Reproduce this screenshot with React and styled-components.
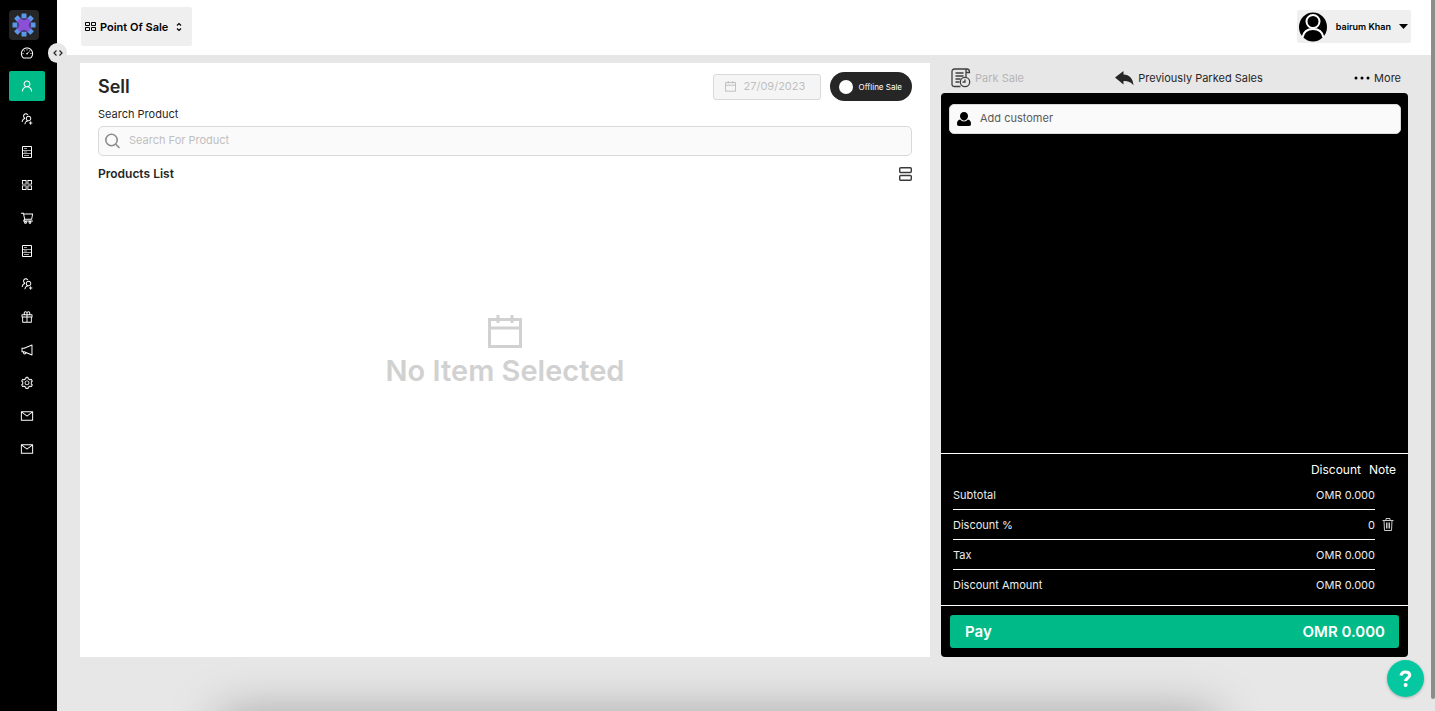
import React from 'react';
import styled, { createGlobalStyle } from 'styled-components';
import {
  AiOutlineAppstore,
  AiOutlineDashboard,
  AiOutlineGift,
  AiOutlineMail,
  AiOutlineNotification,
  AiOutlineSetting,
  AiOutlineShoppingCart,
  AiOutlineUser,
  AiOutlineUsergroupAdd,
} from 'react-icons/ai';

const GlobalStyle = createGlobalStyle`
  * {
    box-sizing: border-box;
  }
  body {
    margin: 0;
    background: #e7e7e7;
    color: #262626;
    font-family: Inter, 'Liberation Sans', sans-serif;
    font-size: 11px;
    line-height: 16px;
    overflow: hidden;
  }
  button, input {
    font: inherit;
    color: inherit;
  }
  button {
    border: 0;
    padding: 0;
    background: none;
    cursor: pointer;
  }
  svg {
    display: block;
    flex-shrink: 0;
  }
  h1, h2, p, dl, dd {
    margin: 0;
  }
`;

const Page = styled.div`
  display: flex;
  min-height: 100vh;
  padding-right: 4px;
`;

const Sidebar = styled.aside`
  position: relative;
  flex: 0 0 57px;
  padding: 10px 9px;
  background: #000;
`;

const Logo = styled.div`
  display: grid;
  place-items: center;
  width: 30px;
  height: 30px;
  border-radius: 4px;
  background: #262626;
`;

const Nav = styled.nav`
  display: flex;
  flex-direction: column;
  gap: 3px;
  margin-top: -2px;
`;

const NavLink = styled.a`
  display: grid;
  place-items: center;
  width: 36px;
  height: 30px;
  border-radius: 2px;
  color: #fff;
  font-size: 14px;
  background: ${(props) => (props.$active ? '#00bb87' : 'transparent')};
`;

const CollapseButton = styled.button`
  position: absolute;
  top: 43px;
  right: -10px;
  display: grid;
  place-items: center;
  width: 19px;
  height: 20px;
  border-radius: 10px;
  background: #e7e7e7;
`;

const Main = styled.div`
  flex: 1;
  min-width: 0;
`;

const Header = styled.header`
  display: flex;
  align-items: center;
  justify-content: space-between;
  height: 55px;
  padding: 0 20px 2px 24px;
  background: #fff;
`;

const ModuleButton = styled.button`
  display: flex;
  align-items: center;
  gap: 4px;
  height: 39px;
  padding: 0 9px 0 4px;
  border-radius: 2px;
  background: #efefef;
  color: #000;
  font-weight: 600;

  svg:last-child {
    margin-left: 3px;
  }
`;

const UserButton = styled.button`
  display: flex;
  align-items: center;
  height: 33px;
  padding: 0 3px 0 2px;
  border-radius: 2px;
  background: #efefef;
  color: #000;
  font-size: 9px;
  font-weight: 600;

  span {
    margin: 0 8px 0 9px;
  }
`;

const Content = styled.main`
  display: grid;
  grid-template-columns: 850fr 467fr;
  gap: 11px;
  min-height: calc(100vh - 109px);
  padding: 8px 23px 0;
`;

const SellPanel = styled.section`
  display: flex;
  flex-direction: column;
  padding: 9px 18px;
  background: #fff;
`;

const TitleRow = styled.div`
  display: flex;
  align-items: center;
  gap: 9px;
  height: 29px;
`;

const Title = styled.h1`
  flex: 1;
  font-size: 18px;
  font-weight: 600;
`;

const DateField = styled.label`
  display: flex;
  align-items: center;
  gap: 8px;
  width: 108px;
  height: 26px;
  padding: 0 11px;
  border: 1px solid #d9d9d9;
  border-radius: 3px;
  background: #f5f5f5;
  color: #bfbfbf;

  input {
    flex: 1;
    min-width: 0;
    padding: 0 0 2px;
    border: 0;
    background: none;
    color: #bfbfbf;
  }
`;

const OfflineButton = styled.button`
  display: flex;
  align-items: center;
  gap: 6px;
  height: 29px;
  padding: 0 10px 0 9px;
  border-radius: 15px;
  background: #262626;
  color: #fff;
  font-size: 8px;
`;

const Dot = styled.span`
  width: 14px;
  height: 14px;
  border-radius: 50%;
  background: #fff;
`;

const SearchLabel = styled.label`
  margin: 5px 0 4px;
`;

const Field = styled.div`
  display: flex;
  align-items: center;
  gap: 8px;
  height: 30px;
  padding: 0 6px;
  border: 1px solid #d9d9d9;
  border-radius: 5px;
  background: #fafafa;

  input {
    flex: 1;
    min-width: 0;
    padding: 0 0 2px;
    border: 0;
    outline: 0;
    background: none;
  }
  input::placeholder {
    color: ${(props) => props.$placeholder};
    opacity: 1;
  }
`;

const ListHeader = styled.div`
  display: flex;
  align-items: center;
  justify-content: space-between;
  margin-top: 10px;

  h2 {
    font-size: 12px;
    font-weight: 600;
  }
`;

const Empty = styled.div`
  display: flex;
  flex-direction: column;
  align-items: center;
  gap: 4px;
  margin-top: 133px;
  color: #d1d1d1;

  p {
    font-size: 29px;
    font-weight: 600;
    line-height: 36px;
  }
`;

const Side = styled.section`
  display: flex;
  flex-direction: column;
`;

const SideToolbar = styled.div`
  display: flex;
  align-items: center;
  justify-content: space-between;
  height: 30px;
  padding: 0 7px 0 10px;
`;

const ToolButton = styled.button`
  display: flex;
  align-items: center;
  gap: 4px;
  color: ${(props) => (props.disabled ? '#b5b5b5' : '#262626')};
`;

const Cart = styled.div`
  display: flex;
  flex: 1;
  flex-direction: column;
  border-radius: 4px;
  background: #000;
  color: #fff;
`;

const Customer = styled.div`
  flex: 1;
  padding: 11px 7px 0 8px;
  color: #000;
`;

const Summary = styled.div`
  padding: 6px 12px;
  border-top: 1px solid #fff;
`;

const Extras = styled.div`
  display: flex;
  justify-content: flex-end;
  gap: 8px;
  font-size: 12px;
  line-height: 20px;
`;

const Totals = styled.dl`
  margin-right: 21px;
  color: #ececec;
`;

const TotalRow = styled.div`
  position: relative;
  display: flex;
  align-items: center;
  justify-content: space-between;
  height: 30px;
  border-bottom: 1px solid #fff;

  &:last-child {
    height: 29px;
    border-bottom: 0;
  }
`;

const TrashButton = styled.button`
  position: absolute;
  top: 8px;
  right: -19px;
`;

const PayArea = styled.div`
  padding: 9px;
  border-top: 1px solid #fff;
`;

const PayButton = styled.button`
  display: flex;
  align-items: center;
  justify-content: space-between;
  width: 100%;
  height: 33px;
  padding: 0 14px 0 15px;
  border-radius: 3px;
  background: #00bb87;
  color: #fff;
  font-size: 15px;
  font-weight: 600;
`;

const HelpButton = styled.button`
  position: fixed;
  right: 11px;
  bottom: 14px;
  display: grid;
  place-items: center;
  width: 37px;
  height: 37px;
  border-radius: 50%;
  background: #06c8a0;
  box-shadow: 0 1px 3px rgba(0, 0, 0, 0.25);
`;

const ScrollThumb = styled.div`
  position: fixed;
  top: 0;
  right: 0;
  bottom: 12px;
  width: 4px;
  border-radius: 0 0 2px 2px;
  background: #8c8c8c;
`;

const BottomShade = styled.div`
  position: fixed;
  right: 230px;
  bottom: -20px;
  left: 230px;
  height: 20px;
  box-shadow: 0 14px 50px 10px rgba(0, 0, 0, 0.34);
  pointer-events: none;
`;

const CabinetIcon = () => (
  <svg width="12" height="12" viewBox="0 0 12 12" fill="none" stroke="currentColor">
    <path d="M1.500.5h9v11h-9z" />
    <path d="M2 4.500h8M2 7.500h8M3 2.500h3M3 6h3M3 9.500h5" opacity=".65" />
  </svg>
);

const navItems = [
  { label: 'Dashboard', icon: AiOutlineDashboard },
  { label: 'Sell', icon: AiOutlineUser, active: true },
  { label: 'Customers', icon: AiOutlineUsergroupAdd },
  { label: 'Reports', icon: CabinetIcon },
  { label: 'Catalog', icon: AiOutlineAppstore },
  { label: 'Purchases', icon: AiOutlineShoppingCart },
  { label: 'Accounting', icon: CabinetIcon },
  { label: 'Staff', icon: AiOutlineUsergroupAdd },
  { label: 'Gifts', icon: AiOutlineGift },
  { label: 'Marketing', icon: AiOutlineNotification },
  { label: 'Settings', icon: AiOutlineSetting },
  { label: 'Email', icon: AiOutlineMail },
  { label: 'Messages', icon: AiOutlineMail },
];

const totals = [
  { label: 'Subtotal', value: 'OMR 0.000' },
  { label: 'Discount %', value: '0', removable: true },
  { label: 'Tax', value: 'OMR 0.000' },
  { label: 'Discount Amount', value: 'OMR 0.000' },
];

const LogoMark = () => (
  <svg width="24" height="24" viewBox="0 0 24 24">
    <circle cx="12" cy="12" r="8" fill="#4a3f86" />
    {[0, 45, 90, 135, 180, 225, 270, 315].map((angle) => (
      <rect
        key={angle}
        x="9.500"
        y="0.500"
        width="5"
        height="4.500"
        rx="0.500"
        fill="#5b97e8"
        transform={`rotate(${angle} 12 12)`}
      />
    ))}
    <path d="M7.500 5.500L12 7.500l4.500-2L18.500 7.500 16.500 12l2 4.500-2 2L12 16.500l-4.500 2-2-2L7.500 12 5.500 7.500z" fill="#8b4fd8" />
  </svg>
);

const GridIcon = () => (
  <svg width="11" height="11" viewBox="0 0 11 11" fill="none" stroke="currentColor">
    <path d="M.5 1.500h4v3h-4zM6.500 1.500h4v3h-4zM.5 6.500h4v3h-4zM6.500 6.500h4v3h-4z" />
  </svg>
);

const SortIcon = () => (
  <svg width="8" height="10" viewBox="0 0 8 10" fill="none" stroke="currentColor" strokeWidth="1.200">
    <path d="M2 3.500L4 1.500l2 2M2 6.500l2 2 2-2" />
  </svg>
);

const CodeIcon = () => (
  <svg width="10" height="8" viewBox="0 0 10 8" fill="none" stroke="#222" strokeWidth="1.200">
    <path d="M3.500 1.500L1 4l2.500 2.500M6.500 1.500L9 4 6.500 6.500" />
  </svg>
);

const Avatar = () => (
  <svg width="28" height="30" viewBox="0 0 28 30">
    <ellipse cx="14" cy="15" rx="14" ry="14.500" fill="#000" />
    <circle cx="14" cy="9.500" r="6.500" fill="none" stroke="#fff" strokeWidth="2" />
    <path d="M3.500 25.500C4.500 20 8.500 17 14 17s9.500 3 10.500 8.500" fill="none" stroke="#fff" strokeWidth="2" />
  </svg>
);

const CalendarIcon = ({ size, stroke }) => (
  <svg width={size} height={size} viewBox="0 0 34 34" fill="none" stroke="currentColor" strokeWidth={stroke}>
    <path d="M1.500 4.500h31v27h-31zM1.500 13h31M10 0v8M24 0v8" />
  </svg>
);

const SearchIcon = () => (
  <svg width="16" height="16" viewBox="0 0 16 16" fill="none" stroke="#8c8c8c" strokeWidth="1.600">
    <circle cx="6.500" cy="7" r="5.700" />
    <path d="M10.500 11l4 4" />
  </svg>
);

const RowsIcon = () => (
  <svg width="13" height="14" viewBox="0 0 13 14" fill="none" stroke="#3a3a3a" strokeWidth="1.400">
    <rect x=".7" y=".7" width="11.600" height="4.800" rx="1" />
    <rect x=".7" y="8.500" width="11.600" height="4.800" rx="1" />
  </svg>
);

const ParkIcon = () => (
  <svg width="20" height="20" viewBox="0 0 20 20" fill="none" stroke="#3f3f3f" strokeWidth="1.300">
    <path d="M15 9V3M9.500 18.500h-6c-1.500 0-2.500-.8-2.500-2V3.500C1 2 2 1 3.500 1H16c1.500 0 2.500 1 2.500 3.500H15V3c0-1 .4-2 1-2" />
    <path d="M4.500 5h8M4.500 8h8M4.500 11h5M4.500 14h4" />
    <circle cx="14" cy="14" r="4.700" />
    <path d="M14 11.500V14h-2.500" />
  </svg>
);

const ReplyIcon = () => (
  <svg width="19" height="16" viewBox="0 0 19 16" fill="#262626">
    <path d="M0 7.500L8.500 1v3.500c6 .3 9.500 4 10 11C16 12 13 11 8.500 11v3.500z" />
  </svg>
);

const DotsIcon = () => (
  <svg width="16" height="4" viewBox="0 0 16 4">
    <circle cx="2" cy="2" r="1.500" />
    <circle cx="8" cy="2" r="1.500" />
    <circle cx="14" cy="2" r="1.500" />
  </svg>
);

const PersonIcon = () => (
  <svg width="16" height="16" viewBox="0 0 15 16">
    <path d="M7.500 1C10 1 11.500 2.800 11.500 5S9.500 9.500 7.500 9.500 3.500 7.200 3.500 5 5 1 7.500 1z" />
    <path d="M3.600 8.500c2 2.600 5.800 2.600 7.800 0 2.200.4 3.100 2 3.100 4.500 0 1.300-.6 2-2 2h-10c-1.400 0-2-.7-2-2 0-2.500.9-4.100 3.100-4.500z" />
  </svg>
);

const TrashIcon = () => (
  <svg width="12" height="13" viewBox="0 0 12 13" fill="none" stroke="#c8c8c8">
    <path d="M.5 2.500h11M4 2.500v-2h4v2M2 2.500l.5 10h7l.5-10M4.500 4.500v6M6 4.500v6M7.500 4.500v6" />
  </svg>
);

const HelpIcon = () => (
  <svg width="13" height="18" viewBox="0 0 13 18" fill="none">
    <path d="M2 5.500C2.400 3.300 4 2 6.500 2c2.600 0 4.200 1.200 4.200 3.200 0 2.800-4 2.800-4 5.800" stroke="#fff" strokeWidth="3.200" />
    <circle cx="6.600" cy="15" r="2" fill="#fff" />
  </svg>
);

function App() {
  return (
    <>
      <GlobalStyle />
      <Page>
        <Sidebar>
          <Logo>
            <LogoMark />
          </Logo>
          <Nav>
            {navItems.map(({ label, icon: Icon, active }) => (
              <NavLink key={label} href="#" aria-label={label} $active={active}>
                <Icon />
              </NavLink>
            ))}
          </Nav>
          <CollapseButton aria-label="Toggle sidebar">
            <CodeIcon />
          </CollapseButton>
        </Sidebar>
        <Main>
          <Header>
            <ModuleButton>
              <GridIcon />
              Point Of Sale
              <SortIcon />
            </ModuleButton>
            <UserButton>
              <Avatar />
              <span>bairum Khan</span>
              <svg width="9" height="5" viewBox="0 0 9 5">
                <path d="M0 0h9L4.500 5z" />
              </svg>
            </UserButton>
          </Header>
          <Content>
            <SellPanel>
              <TitleRow>
                <Title>Sell</Title>
                <DateField>
                  <CalendarIcon size={11} stroke={3} />
                  <input aria-label="Date" defaultValue="27/09/2023" disabled />
                </DateField>
                <OfflineButton>
                  <Dot />
                  Offline Sale
                </OfflineButton>
              </TitleRow>
              <SearchLabel htmlFor="search">Search Product</SearchLabel>
              <Field $placeholder="#bfbfbf">
                <SearchIcon />
                <input id="search" placeholder="Search For Product" />
              </Field>
              <ListHeader>
                <h2>Products List</h2>
                <button aria-label="Change layout">
                  <RowsIcon />
                </button>
              </ListHeader>
              <Empty>
                <CalendarIcon size={34} stroke={3} />
                <p>No Item Selected</p>
              </Empty>
            </SellPanel>
            <Side>
              <SideToolbar>
                <ToolButton disabled>
                  <ParkIcon />
                  Park Sale
                </ToolButton>
                <ToolButton>
                  <ReplyIcon />
                  Previously Parked Sales
                </ToolButton>
                <ToolButton>
                  <DotsIcon />
                  More
                </ToolButton>
              </SideToolbar>
              <Cart>
                <Customer>
                  <Field $placeholder="#595959">
                    <PersonIcon />
                    <input aria-label="Customer" placeholder="Add customer" />
                  </Field>
                </Customer>
                <Summary>
                  <Extras>
                    <button>Discount</button>
                    <button>Note</button>
                  </Extras>
                  <Totals>
                    {totals.map(({ label, value, removable }) => (
                      <TotalRow key={label}>
                        <dt>{label}</dt>
                        <dd>
                          {value}
                          {removable && (
                            <TrashButton aria-label="Remove discount">
                              <TrashIcon />
                            </TrashButton>
                          )}
                        </dd>
                      </TotalRow>
                    ))}
                  </Totals>
                </Summary>
                <PayArea>
                  <PayButton>
                    <span>Pay</span>
                    <span>OMR 0.000</span>
                  </PayButton>
                </PayArea>
              </Cart>
            </Side>
          </Content>
        </Main>
      </Page>
      <BottomShade />
      <ScrollThumb />
      <HelpButton aria-label="Help">
        <HelpIcon />
      </HelpButton>
    </>
  );
}

export default App;
